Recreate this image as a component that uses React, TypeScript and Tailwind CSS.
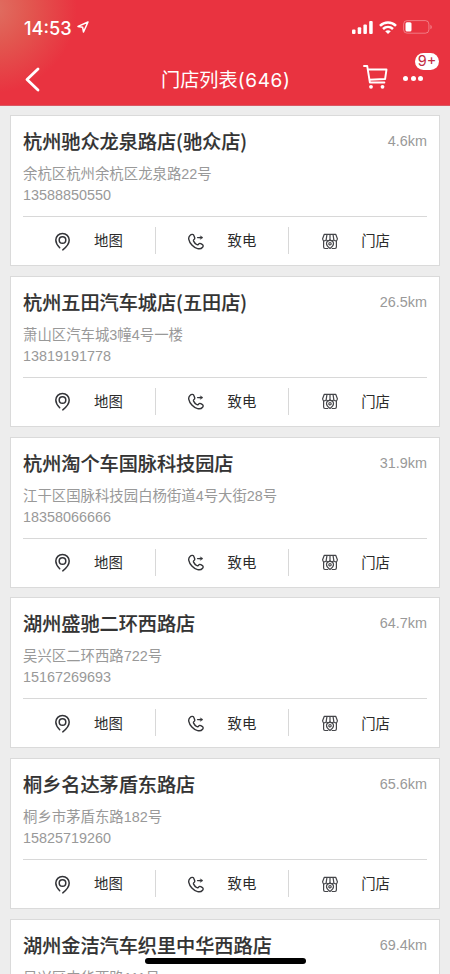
import type { ReactNode } from "react";

type Store = {
  name: string;
  distance: string;
  address: string;
  phone: string;
};

const stores: Store[] = [
  { name: "杭州驰众龙泉路店(驰众店)", distance: "4.6km", address: "余杭区杭州余杭区龙泉路22号", phone: "13588850550" },
  { name: "杭州五田汽车城店(五田店)", distance: "26.5km", address: "萧山区汽车城3幢4号一楼", phone: "13819191778" },
  { name: "杭州淘个车国脉科技园店", distance: "31.9km", address: "江干区国脉科技园白杨街道4号大街28号", phone: "18358066666" },
  { name: "湖州盛驰二环西路店", distance: "64.7km", address: "吴兴区二环西路722号", phone: "15167269693" },
  { name: "桐乡名达茅盾东路店", distance: "65.6km", address: "桐乡市茅盾东路182号", phone: "15825719260" },
  { name: "湖州金洁汽车织里中华西路店", distance: "69.4km", address: "吴兴区中华西路111号", phone: "" },
];

const PinIcon = () => (
  <svg className="h-5 w-4" viewBox="0 0 16 20" fill="none" stroke="#333438" strokeWidth="1.5" strokeLinecap="round">
    <path d="M4.7 16.7C2.1 14.2.8 11.5.8 9.1a6.700 6.700 0 0 1 13.400 0c0 3.700-3 7.200-6.400 9.800" />
    <circle cx="7.5" cy="9" r="3.3" />
  </svg>
);

const PhoneIcon = () => (
  <svg className="h-5 w-4" viewBox="0 0 16 20" fill="none" stroke="#333438" strokeWidth="1.4" strokeLinecap="round" strokeLinejoin="round">
    <path d="M2.200 4.200C.9 5.300.5 6.700.8 8.300c.8 3.900 4.500 8.300 8.800 9.300 2.100.5 3.900 0 5-1.400.9-1.100.6-2.200-.5-2.800l-1.300-.7c-.9-.5-1.700-.3-2.200.4-.5.8-1.200.9-2 .4-1.300-.8-2.400-2.100-3-3.400-.3-.7-.1-1.200.4-1.600.7-.5.9-1.200.6-2L6 4.800c-.5-1.600-2.400-2-3.800-.6z" />
    <path d="M9.600 6.600h3.500" />
    <path d="m12.600 5 2.400 1.600-2.400 1.600z" fill="#333438" strokeWidth=".4" />
  </svg>
);

const ShopIcon = () => (
  <svg className="h-5 w-4" viewBox="0 0 16 20" fill="none" stroke="#45464a" strokeWidth="1.2" strokeLinejoin="round">
    <path d="M2.300 3.300h11.400l1.700 4.400c0 2.400-2.900 2.800-3.600.7-.8 1.800-3 1.800-3.800 0-.8 1.800-3 1.800-3.800 0C3.500 10.500.6 10.100.6 7.700zM5 3.300l-.8 5M8 3.300v5M11 3.300l.8 5" />
    <path d="M1.600 9.900v6.200c0 .9.500 1.400 1.400 1.400h3.300M14.400 9.900v6.200c0 .9-.5 1.400-1.400 1.400H9.700" />
    <path d="M8 17.500c-2.300-1.800-3.500-3.100-3.500-4.700a3.500 3.500 0 0 1 7 0c0 1.600-1.200 2.900-3.500 4.700z" />
    <circle cx="8" cy="12.700" r="1.200" />
  </svg>
);

const Action = ({ icon, label }: { icon: ReactNode; label: string }) => (
  <div className="flex h-[27px] w-[133.600px] shrink-0 items-center border-r border-[#d8d8d8] pl-[32.500px] last:border-r-0">
    {icon}
    <span className="ml-[23.500px] pt-0.5 text-[14.400px] leading-none text-[#2b2b2b]">{label}</span>
  </div>
);

const StoreCard = ({ store }: { store: Store }) => (
  <div className="h-[151px] shrink-0 border border-[#dadada] bg-white px-3">
    <div className="flex h-10 items-start justify-between pt-3">
      <h2 className="font-['Noto_Sans_CJK_SC',sans-serif] text-[19.200px] font-medium leading-[27px] tracking-[-0.050px] text-[#333] [-webkit-text-stroke:0.15px_#333]">
        {store.name}
      </h2>
      <span className="text-[14.400px] leading-[27px] text-[#999]">{store.distance}</span>
    </div>
    <p className="mt-[7px] h-[21px] text-[14.400px] leading-[22px] text-[#999]">{store.address}</p>
    <p className="h-[22px] text-[14.400px] leading-[22px] text-[#999]">{store.phone}</p>
    <div className="mt-2.5 flex border-t border-[#d8d8d8] pt-2.5">
      <div className="-ml-px flex">
        <Action icon={<PinIcon />} label="地图" />
        <Action icon={<PhoneIcon />} label="致电" />
        <Action icon={<ShopIcon />} label="门店" />
      </div>
    </div>
  </div>
);

const StatusBar = () => (
  <div className="flex h-[54px] items-center pl-6 pr-[17px]">
    <span className="w-[50px] pt-0.5 font-['Inter'] text-[18.200px] font-medium leading-none">14:53</span>
    <svg className="ml-[3px] h-3 w-3" viewBox="0 0 12 12" fill="none" stroke="white" strokeWidth="1.500" strokeLinejoin="round">
      <path d="M11 1 1 5.400l4.600.8.9 4.800z" />
    </svg>
    <svg className="ml-auto h-[13px] w-[21px]" viewBox="0 0 21 13" fill="white">
      <rect x="0" y="8.500" width="3.500" height="4.500" rx="1" />
      <rect x="5.700" y="6.300" width="3.500" height="6.700" rx="1" />
      <rect x="11.400" y="3.500" width="3.500" height="9.500" rx="1" />
      <rect x="17.200" y="0" width="3.500" height="13" rx="1" />
    </svg>
    <svg className="ml-1.5 h-[13px] w-[18px]" viewBox="0 0 18 13" fill="none" stroke="white" strokeWidth="2.500">
      <path d="M1 4.800c4.500-4.500 11.500-4.500 16 0M4 8c2.900-2.700 7.100-2.700 10 0" />
      <path d="M6.200 10.200c1.700-1.400 3.900-1.400 5.600 0L9 13z" fill="white" stroke="none" />
    </svg>
    <svg className="ml-1.5 h-[14px] w-[30px]" viewBox="0 0 30 14" fill="none">
      <rect x=".6" y=".6" width="25.300" height="12.600" rx="3.500" stroke="white" strokeOpacity=".35" />
      <rect x="2.500" y="2.300" width="6" height="9.200" rx="1.500" fill="white" />
      <path d="M27.500 4.700c1.600.7 1.600 3.800 0 4.600z" fill="white" fillOpacity=".45" />
    </svg>
  </div>
);

const NavBar = () => (
  <div className="flex h-[51px] items-center pl-[25px] pr-[27px]">
    <svg className="h-[25px] w-[15px]" viewBox="0 0 15 25" fill="none" stroke="white" strokeWidth="2.800" strokeLinecap="round" strokeLinejoin="round">
      <path d="M13 2 2 12.500 13 23" />
    </svg>
    <h1 className="ml-[121px] pt-0.5 text-[19.200px] leading-none">
      门店列表<span className="font-['Inter'] text-[19px] tracking-[0.600px]">(646)</span>
    </h1>
    <svg className="ml-auto -mt-1.5 h-6 w-[25px]" viewBox="0 0 25 24" fill="none" stroke="white" strokeWidth="1.900" strokeLinecap="round" strokeLinejoin="round">
      <path d="M1 1h3.200l2.700 16.500h14.500M4.800 4.500h18.700l-1.400 9.500-15.600.8" />
      <circle cx="8" cy="21.800" r="1.900" fill="white" stroke="none" />
      <circle cx="19.500" cy="21.800" r="1.900" fill="white" stroke="none" />
    </svg>
    <div className="relative -mt-0.5 ml-[15px] flex w-5 justify-between">
      <i className="size-[5px] rounded-full bg-white" />
      <i className="size-[5px] rounded-full bg-white" />
      <i className="size-[5px] rounded-full bg-white" />
      <span className="absolute -top-[23px] left-3 flex h-[17px] w-6 items-center justify-center rounded-full bg-white font-['Inter'] text-[14.500px] leading-none text-[#c22b42]">
        9+
      </span>
    </div>
  </div>
);

export default function App() {
  return (
    <div className="relative flex h-[974px] w-[450px] flex-col overflow-hidden bg-[#ededed] font-['Liberation_Sans','Noto_Sans_CJK_SC',sans-serif]">
      <header className="h-[106px] shrink-0 border-b border-[#d95762] bg-[#e93340] bg-[radial-gradient(ellipse_85px_85px_at_-8px_8px,#df7062_0%,#e2564f_45%,transparent_100%)] text-white">
        <StatusBar />
        <NavBar />
      </header>
      <main className="flex flex-col gap-[9.800px] px-2.5 pt-[9px]">
        {stores.map((store) => (
          <StoreCard key={store.name} store={store} />
        ))}
      </main>
      {/* home indicator */}
      <div className="absolute left-[145px] top-[958px] h-1.5 w-[161px] rounded-full bg-black" />
    </div>
  );
}
